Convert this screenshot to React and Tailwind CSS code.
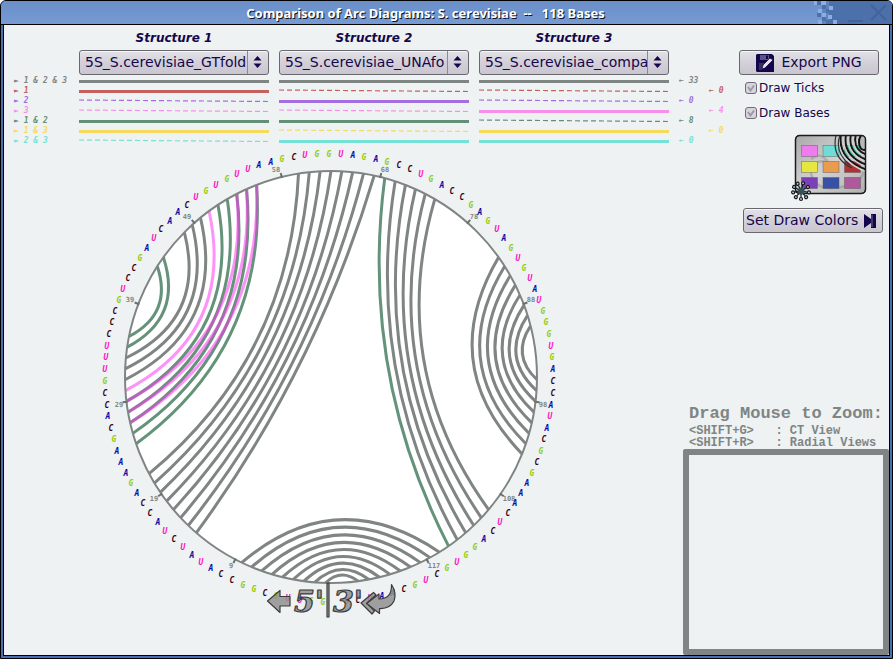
import React from "react";

const SEQUENCE =
  "GGUUGCGGCCAUAUCUACCAGAAAGCACCGUUUCCCGUCCGAUCAACUGUGUUAAGCUGGUAGAGCCUGACCGAGUAGUGUAUGGGUGACCAUACGCGAAACUCAGGUGCUGCAAUCU";

const BASE_COLORS = { A: "#0a0aa8", C: "#3a0418", G: "#93cc10", U: "#fb10bd" };

const STEP = 360 / 119;
const CX = 331;
const CY = 377;
const RADIUS = 206;

// Each helix is [5' base, 3' base, number of stacked pairs going inwards].
const SHARED = [
  [1, 117, 9],
  [14, 64, 8],
  [30, 47, 3],
  [66, 107, 5],
  [78, 97, 8],
];
const FIRST_TWO = [
  [24, 53, 5],
  [33, 42, 2],
  [65, 108, 1],
];
const THIRD = [
  [26, 53, 3],
  [29, 48, 1],
];

const TICKS = [
  ["9", 231, 568],
  ["19", 154, 501],
  ["29", 119, 407],
  ["39", 130, 302],
  ["49", 187, 219],
  ["58", 276, 172],
  ["68", 385, 172],
  ["78", 474, 219],
  ["88", 531, 302],
  ["98", 543, 407],
  ["108", 509, 501],
  ["117", 434, 568],
];

const LEGEND = [
  { label: "1 & 2 & 3", color: "#7f8583", solid: [1, 1, 1], count: 33 },
  { label: "1", color: "#c4605f", solid: [1, 0, 0], count: 0 },
  { label: "2", color: "#a46ee0", solid: [0, 1, 0], count: 0 },
  { label: "3", color: "#f790ea", solid: [0, 0, 1], count: 4 },
  { label: "1 & 2", color: "#648f77", solid: [1, 1, 0], count: 8 },
  { label: "1 & 3", color: "#f6da5c", solid: [1, 0, 1], count: 0 },
  { label: "2 & 3", color: "#74e2d6", solid: [0, 1, 1], count: 0 },
];

const STRUCTURES = [
  { name: "Structure 1", file: "5S_S.cerevisiae_GTfold" },
  { name: "Structure 2", file: "5S_S.cerevisiae_UNAfo" },
  { name: "Structure 3", file: "5S_S.cerevisiae_compa" },
];

function polar(deg, r, cx = CX, cy = CY) {
  const t = (deg * Math.PI) / 180;
  return [cx - r * Math.sin(t), cy + r * Math.cos(t)];
}

// How far from the centre an arc's control point lies, by half of its span.
const PULL = [
  [0, 1],
  [7, 0.89],
  [28, 0.52],
  [54, 0.225],
  [65, 0.14],
  [90, 0],
];

function pull(half) {
  for (let i = 1; i < PULL.length; i++) {
    const [h0, v0] = PULL[i - 1];
    const [h1, v1] = PULL[i];
    if (half <= h1) return v0 + ((v1 - v0) * (half - h0)) / (h1 - h0);
  }
  return 0;
}

function arcPath(i, j) {
  let a = (i - 0.5) * STEP;
  let b = (j - 0.5) * STEP;
  if (b - a > 180) [a, b] = [b - 360, a];
  const [x1, y1] = polar(a, RADIUS);
  const [x2, y2] = polar(b, RADIUS);
  const [qx, qy] = polar((a + b) / 2, RADIUS * pull((b - a) / 2));
  return `M${x1} ${y1}Q${qx} ${qy} ${x2} ${y2}`;
}

function Helices({ groups, color, opacity }) {
  return groups.flatMap(([i, j, n]) =>
    Array.from({ length: n }, (_, k) => (
      <path
        key={`${i}-${j}-${k}`}
        d={arcPath(i + k, j - k)}
        fill="none"
        stroke={color}
        strokeOpacity={opacity}
        strokeWidth="3"
      />
    ))
  );
}

function ArcDiagram() {
  return (
    <svg
      viewBox="80 148 500 476"
      className="mt-[2px] ml-[76px] block h-[476px] w-[500px] shrink-0"
      role="img"
      aria-label="Arc diagram"
    >
      <circle cx={CX} cy={CY} r={RADIUS} fill="#fff" />
      <Helices groups={SHARED} color="#7f8583" opacity="1" />
      <Helices groups={FIRST_TWO} color="#64937a" opacity="1" />
      <Helices groups={THIRD} color="#fb3cf0" opacity="0.56" />
      <circle cx={CX} cy={CY} r={RADIUS} fill="none" stroke="#7f8583" strokeWidth="2" />
      {TICKS.map(([label, x, y], k) => {
        const deg = ((k + 1) * 360) / 13;
        const [x1, y1] = polar(deg, 205);
        const [x2, y2] = polar(deg, 210);
        return (
          <g key={label}>
            <line x1={x1} y1={y1} x2={x2} y2={y2} stroke="#6a706e" strokeWidth="2" />
            <text x={x} y={y} textAnchor="middle" className="fill-[#808684] font-['DejaVu_Sans_Mono',monospace] text-[7px] font-bold">
              {label}
            </text>
          </g>
        );
      })}
      {SEQUENCE.split("").map((base, i) => {
        const [x, y] = polar((i + 0.5) * STEP, 224, 329, 378);
        return (
          <text
            key={i}
            x={Math.round(x)}
            y={Math.round(y) + 3}
            textAnchor="middle"
            fill={BASE_COLORS[base]}
            className="font-['DejaVu_Sans_Mono',monospace] text-[8px] font-bold italic"
          >
            {base}
          </text>
        );
      })}
      <g fill="#909090" fillOpacity="0.85" stroke="#3c3c3c" strokeWidth="1.2" strokeLinejoin="round">
        <path d="M267.500 601L280 590.500V596.500H290V606H280V612.500Z" />
        <path d="M373.500 592.500L361 603L372 614L374.500 611L367 603L376 595Z" />
        <path d="M366.500 603.500L379 594V599Q392 599 391.500 584.500Q397 593 394 601Q390 609 379.500 608.500V613.500Z" />
        <rect x="327" y="583" width="2" height="34" />
        <text x="294" y="612" className="font-['DejaVu_Serif',serif] text-[30px] font-bold italic">5'</text>
        <text x="333" y="612" className="font-['DejaVu_Serif',serif] text-[30px] font-bold italic">3'</text>
      </g>
    </svg>
  );
}

function StructureColumn({ index, name, file }) {
  const id = `structure-${index}`;
  return (
    <div className="flex w-[190px] flex-col">
      <label htmlFor={id} className="h-[20px] text-center text-[12px] leading-[17px] font-bold italic">
        {name}
      </label>
      <div className="relative h-[25px] rounded-[3px] border border-[#68686e] bg-linear-to-b from-[#e4e2e8] via-[#d3d0d9] to-[#c9c6cf] shadow-[inset_0_1px_0_#f6f5f8]">
        <select
          id={id}
          defaultValue={file}
          className="block h-[23px] w-[168px] appearance-none overflow-hidden border-r border-[#8c8a94] bg-transparent pl-[5px] text-[14px] leading-[23px] whitespace-nowrap outline-none"
        >
          <option>{file}</option>
        </select>
        <svg viewBox="0 0 8 12" className="pointer-events-none absolute top-[5px] right-[6px] h-[12px] w-[9px]" aria-hidden="true">
          <path d="M4 0L8 4.500H0ZM4 12L8 7.500H0Z" fill="#14064a" />
        </svg>
      </div>
      <svg viewBox="0 0 190 70" className="block h-[70px] w-full" aria-hidden="true">
        {LEGEND.map((row, k) =>
          row.solid[index] ? (
            <line key={row.label} x1="0" x2="190" y1={6.5 + 10 * k} y2={6.5 + 10 * k} stroke={row.color} strokeWidth="3" />
          ) : (
            <line key={row.label} x1="0" x2="190" y1={5 + 10 * k} y2={6.5 + 10 * k} stroke={row.color} strokeWidth="1.2" strokeDasharray="5 3" />
          )
        )}
      </svg>
    </div>
  );
}

function TitleBar() {
  return (
    <header className="relative flex h-[24px] items-center justify-center border-b border-black bg-linear-to-b from-[#6a8fc9] to-[#769ad2]">
      <h1 className="pr-[42px] font-['Noto_Sans',sans-serif] text-[13px] leading-[22px] font-bold whitespace-pre text-white [text-shadow:1px_1px_0_#10131c]">
        Comparison of Arc Diagrams: S. cerevisiae  --   118 Bases
      </h1>
      <div className="absolute inset-y-0 right-0 flex w-[80px]">
        <svg viewBox="812 1 80 23" className="h-[23px] w-[80px]" aria-hidden="true">
          <rect x="829" y="1" width="63" height="23" fill="#4c70aa" />
          <path d="M822 1h7v23h-7z" fill="#5f84be" />
          <path d="M817 1h4v4h-4zM822 5h4v4h-4zM817 13h4v4h-4zM826 9h4v4h-4zM822 17h4v4h-4zM829 13h4v4h-4zM833 5h4v4h-4zM826 20h4v4h-4z" fill="#4c70aa" />
          <path d="M814 1h3v4h-3zM821 1h5v4h-5zM818 9h4v4h-4zM829 6h4v4h-4zM822 13h4v4h-4zM828 15h4v4h-4zM818 20h4v4h-4zM833 20h4v4h-4z" fill="#8fade0" />
          <path d="M848 21H863" stroke="#44639a" strokeWidth="2" />
          <path d="M871 5L886 20M886 5L871 20" stroke="#44639a" strokeWidth="2" />
        </svg>
      </div>
    </header>
  );
}

function PaletteIcon() {
  const colors = ["#ee7cee", "#70dcd8", "#3fcaa6", "#e5e640", "#e99b50", "#b03232", "#7a40b8", "#3850a6", "#b0589c"];
  return (
    <svg viewBox="789 134 80 70" className="block h-[70px] w-[80px]" aria-hidden="true">
      <defs>
        <linearGradient id="plate" x1="0" y1="0" x2="1" y2="1">
          <stop offset="0" stopColor="#a9a9a9" />
          <stop offset="0.5" stopColor="#d2d2d2" />
          <stop offset="1" stopColor="#b0b0b0" />
        </linearGradient>
        <clipPath id="plate-clip">
          <rect x="795.500" y="135.500" width="70" height="58" rx="4" />
        </clipPath>
      </defs>
      <rect x="795.500" y="135.500" width="70" height="58" rx="4" fill="url(#plate)" stroke="#1c1c1c" />
      <path d="M811 159Q820 151 828 162Q812 158 811 174Q816 194 846 186Q862 182 864 170" fill="none" stroke="#999" strokeOpacity="0.6" strokeWidth="2.500" />
      {colors.map((c, k) => (
        <rect
          key={c}
          x={801.5 + 21.5 * (k % 3)}
          y={145.5 + 16 * Math.floor(k / 3)}
          width="16"
          height="11"
          fill={c}
          stroke="#555"
          strokeOpacity="0.6"
          strokeWidth="0.700"
        />
      ))}
      <g clipPath="url(#plate-clip)" fill="none">
        <ellipse cx="864" cy="142" rx="5" ry="8" fill="#b8b8b8" stroke="#111" strokeWidth="2" />
        {[0, 1, 2, 3].map((n) => (
          <g key={n}>
            <path
              d={`M${856 - 5 * n} 134Q${852 - 5 * n} ${150 + 3 * n} 867 ${155 + 5 * n}`}
              stroke="#151515"
              strokeWidth="2"
            />
            <path
              d={`M${854 - 5 * n} 134Q${850 - 5 * n} ${151 + 3 * n} 867 ${157 + 5 * n}`}
              stroke="#d0d0d0"
              strokeWidth="1.500"
            />
          </g>
        ))}
        <path d="M836 135Q831 158 852 168M840 135Q834 152 850 165" stroke="#333" strokeWidth="1.200" />
      </g>
      <rect x="795.500" y="135.500" width="70" height="58" rx="4" fill="none" stroke="#1c1c1c" strokeWidth="1.500" />
      <g stroke="#15191c" strokeWidth="1.200" fill="#c5ced0">
        {[15, 60, 100, 140, 180, 220, 260, 300, 335].map((d) => (
          <g key={d} transform={`rotate(${d} 801 191)`}>
            <path d="M801 190V185" />
            <circle cx="801" cy="183" r="1.500" />
          </g>
        ))}
        <circle cx="801" cy="191" r="3.500" fill="#33505c" stroke="none" />
      </g>
    </svg>
  );
}

const BUTTON =
  "flex h-[25px] w-[140px] items-center rounded-[3px] border border-[#68686e] bg-linear-to-b from-[#e4e2e8] via-[#d3d0d9] to-[#c9c6cf] text-[14px] leading-[23px] whitespace-nowrap shadow-[inset_0_1px_0_#f6f5f8]";

function Check({ id, label }) {
  return (
    <div className="flex h-[25px] items-center gap-[2px]">
      <span className="grid size-[12px] place-items-center">
        <input
          id={id}
          type="checkbox"
          defaultChecked
          className="col-start-1 row-start-1 size-[12px] appearance-none rounded-[3px] border border-[#6e6c76] bg-[#d6d3dc]"
        />
        <svg viewBox="0 0 8 8" className="pointer-events-none col-start-1 row-start-1 size-[8px]" aria-hidden="true">
          <path d="M1 3L3.500 6.500L7 1.500" fill="none" stroke="#9a96a8" strokeWidth="1.800" />
        </svg>
      </span>
      <label htmlFor={id} className="text-[12px] leading-[16px]">
        {label}
      </label>
    </div>
  );
}

function Controls() {
  return (
    <aside className="flex w-[154px] shrink-0 flex-col pt-[25px]">
      <button type="button" className={`${BUTTON} ml-[4px] justify-center gap-[7px]`}>
        <svg viewBox="0 0 18 18" className="size-[18px]" aria-hidden="true">
          <path d="M1 0H16L18 2V18H1L0 17V1Z" fill="#14064a" />
          <path d="M4 1H13V6H4Z" fill="#5a5480" />
          <path d="M10 1.500H12V5H10Z" fill="#14064a" />
          <path d="M3 9H11L6 16H3Z" fill="#36305f" />
          <path d="M6 15L7 11L14 4L17 6L9 14Z" fill="#e6e4ea" stroke="#14064a" strokeWidth="0.800" />
        </svg>
        Export PNG
      </button>
      <div className="ml-[10px]">
        <Check id="draw-ticks" label="Draw Ticks" />
        <Check id="draw-bases" label="Draw Bases" />
      </div>
      <div className="mt-[9px] ml-[54px]">
        <PaletteIcon />
      </div>
      <button type="button" className={`${BUTTON} mt-[4px] ml-[8px] justify-start gap-[6px] pl-[2px]`}>
        Set Draw Colors
        <svg viewBox="0 0 12 14" className="h-[14px] w-[12px]" aria-hidden="true">
          <path d="M0 0L7 5V0H12V14H7V9L0 14Z" fill="#14064a" />
          <path d="M8 1V13" stroke="#8a86a4" strokeWidth="0.800" />
        </svg>
      </button>
      <section className="mt-auto w-[206px] self-end font-['Liberation_Mono',monospace] font-bold whitespace-pre text-[#7f8583]">
        <h2 className="pl-[6px] text-[17px] leading-[22px]">Drag Mouse to Zoom:</h2>
        <div className="pl-[6px] text-[12px] leading-[12px]">
          <p>{"<SHIFT+G>   : CT View"}</p>
          <p>{"<SHIFT+R>   : Radial Views"}</p>
        </div>
        <div className="h-[206px] rounded-[2px] border-6 border-[#7f8583]" />
      </section>
    </aside>
  );
}

export default function App() {
  return (
    <div className="flex min-h-screen w-full flex-col overflow-hidden rounded-t-[6px] border border-black bg-[#4a6fb0] font-['DejaVu_Sans',sans-serif] text-[#14064a]">
      <TitleBar />
      <div className="mx-[2px] mb-[2px] flex grow border-x border-b border-black bg-[#eef2f3]">
        <main className="min-w-0 grow">
          <div className="flex pt-[5px] pl-[10px]">
            <ul className="w-[65px] shrink-0 pt-[46px] font-['DejaVu_Sans_Mono',monospace] text-[8px] leading-[10px] font-bold whitespace-nowrap italic">
              {LEGEND.map((row) => (
                <li key={row.label} style={{ color: row.color }}>
                  ► {row.label}
                </li>
              ))}
            </ul>
            <div className="flex shrink-0 gap-[10px]">
              {STRUCTURES.map((s, i) => (
                <StructureColumn key={s.name} index={i} name={s.name} file={s.file} />
              ))}
            </div>
            <ul className="pt-[46px] pl-[10px] font-['DejaVu_Sans_Mono',monospace] text-[8px] leading-[10px] font-bold whitespace-nowrap italic">
              {LEGEND.map((row, k) => (
                <li key={row.label} style={{ color: row.color }} className={k % 2 ? "pl-[30px]" : ""}>
                  ← {row.count}
                </li>
              ))}
            </ul>
          </div>
          <ArcDiagram />
        </main>
        <Controls />
      </div>
    </div>
  );
}
